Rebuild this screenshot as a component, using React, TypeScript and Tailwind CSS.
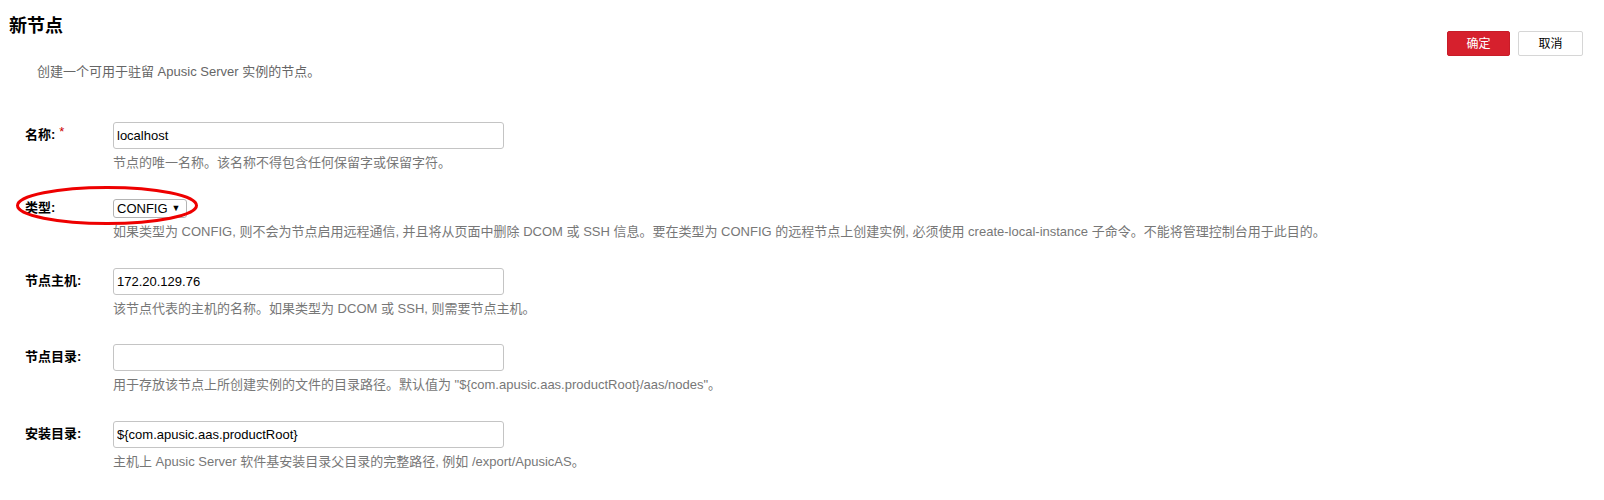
import React from "react";

const font = { fontFamily: '"Liberation Sans", Arial, "Noto Sans CJK SC", sans-serif' };

type RowProps = {
  label: string;
  required?: boolean;
  help: string;
  children: React.ReactNode;
  className?: string;
  labelPad?: string;
};

const Row = ({ label, required, help, children, className, labelPad }: RowProps) => (
  <div className={`flex ${className ?? ""}`}>
    <div className={`w-[88px] shrink-0 ${labelPad ?? "pt-[5px]"} text-[13px] font-bold text-black leading-[16px]`}>
      {label}
      {required && <sup className="ml-[4px] text-[13px] font-normal text-[#cc0000] top-[-3px]">*</sup>}
    </div>
    <div className="flex flex-col">
      {children}
      <div className="mt-[6px] text-[13px] leading-[15px] text-[#777] whitespace-nowrap">{help}</div>
    </div>
  </div>
);

const TextInput = ({ value }: { value: string }) => (
  <input
    readOnly
    value={value}
    className="w-[391px] h-[27px] border border-[#c4c4c4] rounded-[3px] px-[3px] text-[13px] text-black outline-none bg-white"
    style={font}
  />
);

export default function App() {
  return (
    <div className="w-[1604px] h-[500px] bg-white relative" style={font}>
      <div className="flex justify-between">
        <div>
          <h1 className="pl-[9px] pt-[14px] text-[18px] font-bold text-black leading-[24px]">新节点</h1>
          <p className="pl-[37px] mt-[26px] text-[13px] leading-[15px] text-[#666]">创建一个可用于驻留 Apusic Server 实例的节点。</p>
        </div>
        <div className="flex gap-[8px] pt-[31px] pr-[21px]">
          <button className="w-[63px] h-[25px] rounded-[2px] bg-[#d6202d] text-white text-[12px] border border-[#c81c28]">确定</button>
          <button className="w-[65px] h-[25px] rounded-[2px] bg-white text-black text-[12px] border border-[#d6d6d6]">取消</button>
        </div>
      </div>

      <div className="pl-[25px] mt-[43px] flex flex-col">
        <Row label="名称:" required help="节点的唯一名称。该名称不得包含任何保留字或保留字符。">
          <TextInput value="localhost" />
        </Row>

        <Row
          className="mt-[29px]"
          labelPad="pt-[1px]"
          label="类型:"
          help="如果类型为 CONFIG, 则不会为节点启用远程通信, 并且将从页面中删除 DCOM 或 SSH 信息。要在类型为 CONFIG 的远程节点上创建实例, 必须使用 create-local-instance 子命令。不能将管理控制台用于此目的。"
        >
          <div className="w-[74px] h-[19px] border border-[#b4b4b4] rounded-[3px] flex items-center pl-[3px] text-[13px] text-black bg-white">
            CONFIG <span className="ml-[4px] text-[9px]">▼</span>
          </div>
        </Row>

        <Row className="mt-[29px]" label="节点主机:" help="该节点代表的主机的名称。如果类型为 DCOM 或 SSH, 则需要节点主机。">
          <TextInput value="172.20.129.76" />
        </Row>

        <Row
          className="mt-[28px]"
          label="节点目录:"
          help={'用于存放该节点上所创建实例的文件的目录路径。默认值为 "${com.apusic.aas.productRoot}/aas/nodes"。'}
        >
          <TextInput value="" />
        </Row>

        <Row className="mt-[29px]" label="安装目录:" help="主机上 Apusic Server 软件基安装目录父目录的完整路径, 例如 /export/ApusicAS。">
          <TextInput value="${com.apusic.aas.productRoot}" />
        </Row>
      </div>

      <svg className="absolute left-[15px] top-[185px]" width="186" height="41" viewBox="0 0 186 41">
        <ellipse cx="92" cy="20.5" rx="89.5" ry="18" fill="none" stroke="#ee0000" strokeWidth="3" />
      </svg>
    </div>
  );
}
